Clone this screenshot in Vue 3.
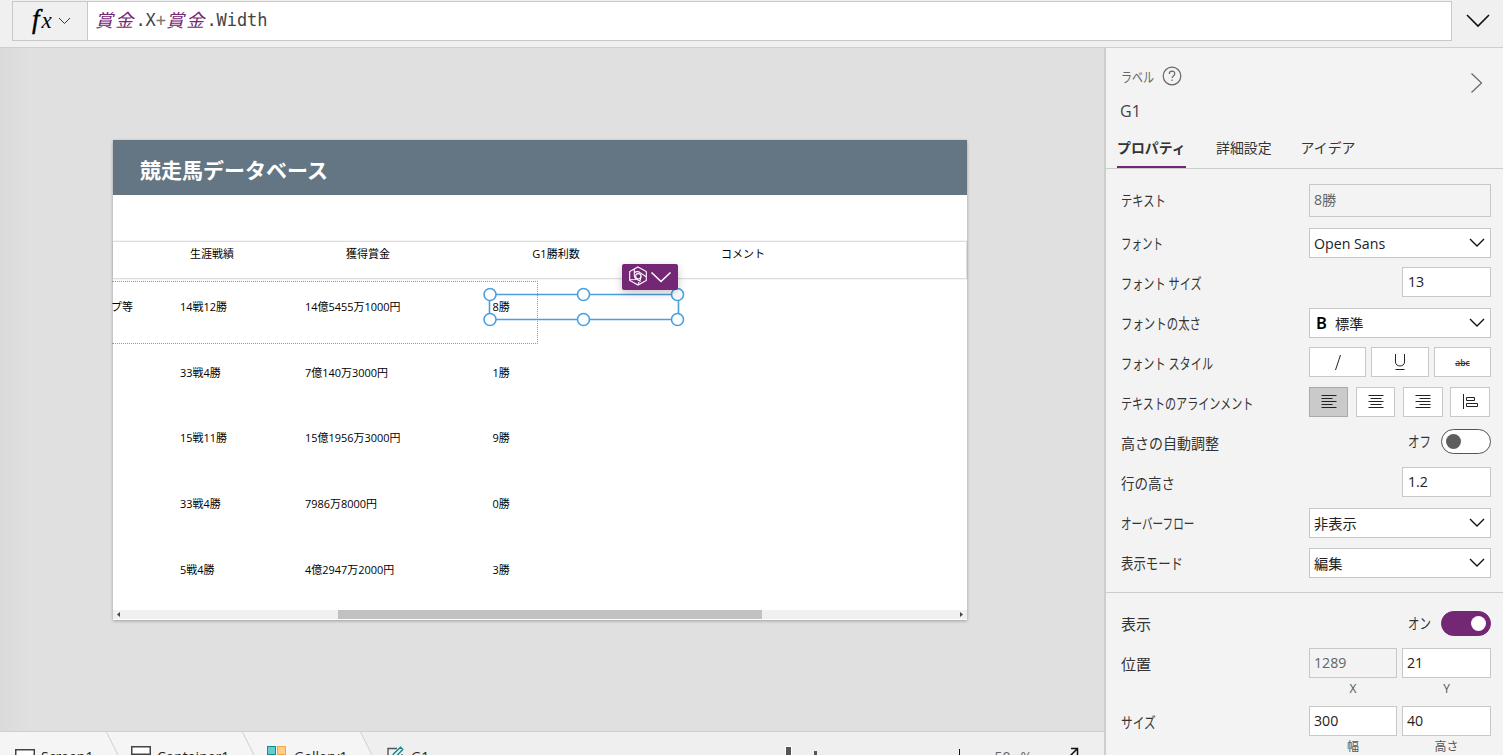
<template>
    <div class="studio">
        <header class="formula-bar">
            <div class="fx">
                <span class="fx-name"><span class="fx-f">f</span>x</span>
                <svg width="13" height="8" viewBox="0 0 13 8"><path d="M1 1l5.5 5.5L12 1" /></svg>
            </div>
            <div class="formula">
                <template v-for="(token, i) in formula" :key="i">
                    <span :class="token.type">{{ token.text }}</span>
                </template>
            </div>
            <div class="expand">
                <svg width="24" height="14" viewBox="0 0 24 14"><path d="M1 1l11 11L23 1" /></svg>
            </div>
        </header>

        <div class="body">
            <main class="work">
                <div class="stage">
                    <div class="screen">
                        <div class="title">競走馬データベース</div>
                        <div class="table-head">
                            <span v-for="name in columns" :key="name">{{ name }}</span>
                        </div>
                        <div class="gallery">
                            <div v-for="(horse, i) in horses" :key="i" class="horse">
                                <span class="note">{{ horse.note }}</span>
                                <span>{{ horse.record }}</span>
                                <span>{{ horse.prize }}</span>
                                <span>{{ horse.g1 }}</span>
                            </div>
                        </div>
                        <div class="scrollbar">
                            <svg width="3" height="5" viewBox="0 0 3 5"><path d="M3 0v5L0 2.5z" /></svg>
                            <div class="thumb"></div>
                            <svg width="3" height="5" viewBox="0 0 3 5"><path d="M0 0v5l3-2.5z" /></svg>
                        </div>
                        <div class="row-outline"></div>
                        <svg class="selection" width="204" height="42" viewBox="0 0 204 42">
                            <path d="M8 8.500H196M8 33.500H196M7.500 8v26M196.500 8v26" />
                            <circle v-for="(h, i) in handles" :key="i" :cx="h[0]" :cy="h[1]" r="6" />
                        </svg>
                        <div class="copilot">
                            <svg width="20" height="20" viewBox="0 0 20 20">
                                <path d="M10 1l8.300 4.600v8.800L10 19l-8.300-4.600V5.600z" />
                                <circle cx="10.300" cy="10.300" r="2.700" />
                                <path d="M6.300 3v6.500c0 1.800 1 3 2.400 3.800l4 2.200M6.500 6.500c2-1.200 4.500-.8 6 .4l5.500 3.800M2 13.800l6-.3M13 10.500c0 2.500-.8 4.500-3 7.500" />
                            </svg>
                            <svg width="22" height="13" viewBox="0 0 22 13"><path d="M1.500 1.500l9.500 9 9.500-9" /></svg>
                        </div>
                    </div>
                </div>

                <footer class="status">
                    <template v-for="crumb in crumbs" :key="crumb.name">
                        <div :class="['crumb', 'crumb-' + crumb.icon]">
                            <svg v-if="crumb.icon === 'screen'" width="20" height="16" viewBox="0 0 20 16">
                                <rect x=".75" y=".75" width="18.500" height="14" fill="#fff" stroke="#444" stroke-width="1.500" />
                            </svg>
                            <svg v-else-if="crumb.icon === 'container'" width="20" height="20" viewBox="0 0 20 20">
                                <rect x=".75" y=".75" width="18.500" height="7.500" fill="#fff" stroke="#444" stroke-width="1.500" />
                                <rect x=".75" y="11" width="18.500" height="7.500" fill="#fff" stroke="#444" stroke-width="1.500" />
                            </svg>
                            <svg v-else-if="crumb.icon === 'gallery'" width="20" height="20" viewBox="0 0 20 20">
                                <rect x=".5" y=".5" width="8" height="8" fill="#69c9cb" stroke="#0f8f93" />
                                <rect x="10.500" y=".5" width="8" height="8" fill="#fcce87" stroke="#f3aa3c" />
                                <rect x=".5" y="10.500" width="8" height="8" fill="#fcce87" stroke="#f3aa3c" />
                            </svg>
                            <svg v-else width="18" height="18" viewBox="0 0 18 18">
                                <path d="M10 2.500H1v14h14V8" fill="none" stroke="#555" stroke-width="1.400" />
                                <path d="M5 12l1.500-4L13.500 1.200l2.300 2.300L9 10.500z" fill="#e6f5f5" stroke="#12898b" stroke-width="1.400" />
                            </svg>
                            <span>{{ crumb.name }}</span>
                        </div>
                        <svg v-if="crumb.icon !== 'label'" class="slash" width="14" height="24" viewBox="0 0 14 24">
                            <path v-if="crumb.icon === 'gallery'" class="fill" d="M0 0h14v24h-2z" />
                            <path d="M.5 0l12 24" />
                        </svg>
                    </template>
                    <div class="zoom">
                        <i class="slider"></i>
                        <i class="notch"></i>
                        <svg class="plus" width="13" height="14" viewBox="0 0 13 14"><path d="M6.500 0v14M0 7h13" /></svg>
                        <span>50</span><span class="percent">%</span>
                        <svg class="fit" width="16" height="16" viewBox="0 0 16 16"><path d="M8 1.500h6.500V8M14.500 1.500L2 14" /></svg>
                    </div>
                </footer>
            </main>

            <aside class="panel">
                <div class="panel-head">
                    <div class="kind">
                        <span class="kind-name"><span class="squeeze" :style="squeeze('ラベル', 33, 14)">ラベル</span></span>
                        <svg width="20" height="20" viewBox="0 0 20 20">
                            <circle cx="10" cy="10" r="8.800" />
                            <path d="M7.300 8c0-3.800 5.500-3.600 5.500-.3 0 2.200-2.700 2.200-2.700 4.300M10.100 13.600v1.500" />
                        </svg>
                        <svg class="collapse" width="13" height="22" viewBox="0 0 13 22"><path d="M1.500 1.500l10 9.500-10 9.500" /></svg>
                    </div>
                    <div class="control-name">G1</div>
                    <nav class="tabs">
                        <span class="active">プロパティ</span>
                        <span>詳細設定</span>
                        <span>アイデア</span>
                    </nav>
                </div>

                <section class="group">
                    <div v-for="row in rows" :key="row.label" :class="['row', 'row-' + row.type]">
                        <label><span class="squeeze" :style="squeeze(row.label, row.width)">{{ row.label }}</span></label>
                        <div v-if="row.type === 'text'" class="field readonly">{{ row.value }}</div>
                        <div v-else-if="row.type === 'number'" class="field short">{{ row.value }}</div>
                        <div v-else-if="row.type === 'select'" class="field select">
                            <b v-if="row.bold">B</b>
                            <span>{{ row.value }}</span>
                            <svg width="16" height="10" viewBox="0 0 16 10"><path d="M1 1l7 7 7-7" /></svg>
                        </div>
                        <div v-else-if="row.type === 'style'" class="buttons">
                            <span class="btn"><svg width="10" height="18" viewBox="0 0 10 18"><path d="M7.500 2L2.500 17" /></svg></span>
                            <span class="btn"><svg width="14" height="18" viewBox="0 0 14 18"><path d="M2.500 1v8c0 5.300 9 5.300 9 0V1M2.500 16.500h9" /></svg></span>
                            <span class="btn strike">abc</span>
                        </div>
                        <div v-else-if="row.type === 'align'" class="buttons align">
                            <span v-for="(path, i) in alignments" :key="i" :class="['btn', { on: i === 0 }]">
                                <svg width="16" height="16" viewBox="0 0 16 16"><path :d="path" /></svg>
                            </span>
                        </div>
                        <div v-else-if="row.type === 'toggle'" class="switch">
                            <span class="state"><span class="squeeze" :style="squeeze(row.value, 23)">{{ row.value }}</span></span>
                            <span :class="['toggle', { on: row.on }]"></span>
                        </div>
                    </div>
                </section>

                <section class="group second">
                    <div class="row row-visible">
                        <label>表示</label>
                        <div class="switch">
                            <span class="state"><span class="squeeze" :style="squeeze('オン', 23)">オン</span></span>
                            <span class="toggle on"></span>
                        </div>
                    </div>
                    <div v-for="pair in pairs" :key="pair.label" class="row row-pair">
                        <label><span class="squeeze" :style="squeeze(pair.label, pair.width)">{{ pair.label }}</span></label>
                        <div v-for="item in pair.items" :key="item.name" class="cell">
                            <div :class="['field', { readonly: item.readonly }]">{{ item.value }}</div>
                            <small>{{ item.name }}</small>
                        </div>
                    </div>
                </section>
            </aside>
        </div>
    </div>
</template>

<script setup>
const formula = [
    { type: 'name', text: '賞金' },
    { type: 'prop', text: '.X' },
    { type: 'op', text: '+' },
    { type: 'name', text: '賞金' },
    { type: 'prop', text: '.Width' },
];

const columns = ['生涯戦績', '獲得賞金', 'G1勝利数', 'コメント'];

const horses = [
    { note: 'プ等', record: '14戦12勝', prize: '14億5455万1000円', g1: '8勝' },
    { note: '', record: '33戦4勝', prize: '7億140万3000円', g1: '1勝' },
    { note: '', record: '15戦11勝', prize: '15億1956万3000円', g1: '9勝' },
    { note: '', record: '33戦4勝', prize: '7986万8000円', g1: '0勝' },
    { note: '', record: '5戦4勝', prize: '4億2947万2000円', g1: '3勝' },
];

const handles = [[8, 8.5], [101.5, 8.5], [195.5, 8.5], [8, 33.5], [101.5, 33.5], [195.5, 33.5]];

const crumbs = [
    { icon: 'screen', name: 'Screen1' },
    { icon: 'container', name: 'Container1' },
    { icon: 'gallery', name: 'Gallery1' },
    { icon: 'label', name: 'G1' },
];

const rows = [
    { type: 'text', label: 'テキスト', width: 45, value: '8勝' },
    { type: 'select', label: 'フォント', width: 42, value: 'Open Sans' },
    { type: 'number', label: 'フォント サイズ', width: 81, value: '13' },
    { type: 'select', label: 'フォントの太さ', width: 80, value: '標準', bold: true },
    { type: 'style', label: 'フォント スタイル', width: 92 },
    { type: 'align', label: 'テキストのアラインメント', width: 133 },
    { type: 'toggle', label: '高さの自動調整', width: 98, value: 'オフ', on: false },
    { type: 'number', label: '行の高さ', width: 54, value: '1.2' },
    { type: 'select', label: 'オーバーフロー', width: 74, value: '非表示' },
    { type: 'select', label: '表示モード', width: 62, value: '編集' },
];

const pairs = [
    {
        label: '位置',
        width: 30,
        items: [{ name: 'X', value: '1289', readonly: true }, { name: 'Y', value: '21' }],
    },
    {
        label: 'サイズ',
        width: 35,
        items: [{ name: '幅', value: '300' }, { name: '高さ', value: '40' }],
    },
];

// left, center, right, justify
const alignments = [
    'M.5 1.500h15M.5 4.500h11M.5 7.500h15M.5 10.500h11M.5 13.500h15',
    'M.5 1.500h15M2.500 4.500h11M.5 7.500h15M2.500 10.500h11M.5 13.500h15',
    'M.5 1.500h15M4.500 4.500h11M.5 7.500h15M4.500 10.500h11M.5 13.500h15',
    'M1.500 0v15M4.500 3.500h8v3h-8zM4.500 9.500h11v3h-11z',
];

const squeeze = (text, width, size = 15) => {
    const natural = [...text].reduce((sum, ch) => sum + (ch === ' ' ? size * 0.26 : size), 0);
    return { transform: `scaleX(${(width / natural).toFixed(3)})` };
};
</script>

<style>
    body {
        margin: 0;
        overflow: hidden;
    }
</style>

<style scoped>
    .studio {
        display: flex;
        flex-direction: column;
        width: 1503px;
        height: 755px;
        overflow: hidden;
        background: #f0f0f0;
        color: #333;
        font-family: "Open Sans", "Noto Sans CJK JP", sans-serif;
        font-size: 15px;
    }
    .studio * {
        box-sizing: border-box;
    }
    svg {
        display: block;
        flex: none;
        fill: none;
        stroke: #111;
    }
    .formula-bar {
        display: flex;
        flex: none;
        height: 48px;
        padding: 1px 0 6px 12px;
        border-bottom: 1px solid #cfcfcf;
    }
    .fx {
        display: flex;
        align-items: center;
        width: 76px;
        height: 40px;
        padding-left: 19px;
        gap: 5px;
        border: 1px solid #c8c8c8;
    }
    .fx svg {
        stroke: #333;
    }
    .fx-name {
        width: 21px;
        margin-top: -3px;
        font: italic 23px/30px "Liberation Serif", serif;
        color: #000;
    }
    .fx-f {
        font-size: 27px;
        letter-spacing: 2px;
        -webkit-text-stroke: .4px #000;
    }
    .formula {
        display: flex;
        width: 1364px;
        height: 40px;
        padding-left: 7px;
        border: 1px solid #c8c8c8;
        border-left: none;
        background: #fff;
        font: 17px/37px "DejaVu Sans Mono", monospace;
        letter-spacing: -.05px;
        color: #444;
        white-space: pre;
    }
    .formula .name {
        font: italic 18px/35px "Noto Sans CJK JP", sans-serif;
        letter-spacing: 2.2px;
        color: #742774;
    }
    .formula .op {
        color: #777;
    }
    .expand {
        display: flex;
        align-items: center;
        margin-left: 14px;
    }
    .expand svg {
        stroke-width: 1.6;
    }
    .body {
        display: flex;
        flex: 1;
        min-height: 0;
    }
    .work {
        display: flex;
        flex-direction: column;
        width: 1106px;
        overflow: hidden;
        border-right: 2px solid #cecece;
    }
    .stage {
        flex: none;
        height: 683px;
        padding: 92px 0 0 113px;
        background: linear-gradient(90deg, #dadada, #e0e0e0 30px);
    }
    .screen {
        position: relative;
        width: 854px;
        height: 480px;
        background: #fff;
        color: #000;
        font-size: 11px;
        box-shadow: 0 1px 3px rgba(0, 0, 0, .3);
    }
    .title {
        height: 55px;
        padding-left: 27px;
        background: #647683;
        color: #fff;
        font-size: 21px;
        font-weight: bold;
        line-height: 60px;
    }
    .table-head {
        display: grid;
        grid-template-columns: 156px 156px 220px 154px;
        height: 38px;
        margin-top: 46px;
        padding-left: 21px;
        border: 1px solid #ddd;
        border-left: none;
        line-height: 23px;
        text-align: center;
        box-shadow: 0 0 2px rgba(0, 0, 0, .12);
    }
    .gallery {
        height: 331px;
        padding-top: 2px;
    }
    .horse {
        display: grid;
        grid-template-columns: 67px 125px 187.5px 187px;
        height: 65.7px;
        font-size: 10.95px;
        line-height: 51px;
        white-space: nowrap;
    }
    .note {
        margin-left: -2px;
    }
    .scrollbar {
        display: flex;
        align-items: center;
        justify-content: space-between;
        height: 9px;
        padding: 0 4px;
        background: #f0f0f0;
    }
    .scrollbar svg {
        fill: #444;
        stroke: none;
    }
    .thumb {
        width: 424px;
        height: 9px;
        margin-left: 20px;
        background: #c1c1c1;
    }
    .row-outline {
        position: absolute;
        left: -1px;
        top: 141px;
        width: 426px;
        height: 63px;
        border: 1px dotted #5ea6de;
        border-left: none;
    }
    .selection {
        position: absolute;
        left: 369px;
        top: 146px;
    }
    .selection path,
    .selection circle {
        stroke: #4a9fdf;
        stroke-width: 1.6;
    }
    .selection circle {
        fill: #fff;
    }
    .copilot {
        position: absolute;
        left: 509px;
        top: 124px;
        display: flex;
        align-items: center;
        width: 56px;
        height: 26px;
        padding: 0 0 3px 6px;
        gap: 2px;
        border-radius: 2px;
        background: #742774;
        box-shadow: 0 3px 8px rgba(0, 0, 0, .22);
    }
    .copilot svg {
        stroke: #fff;
        stroke-width: 1.1;
    }
    .copilot svg + svg {
        margin-top: 3px;
        stroke-width: 1.6;
    }
    .status {
        display: flex;
        flex: none;
        height: 50px;
        border-top: 1px solid #cfcfcf;
        background: #efefef;
        color: #222;
        font-size: 14px;
        line-height: 49px;
    }
    .crumb {
        display: flex;
        gap: 6px;
        background: #f5f5f5;
    }
    .crumb-screen {
        width: 106px;
        padding-left: 15px;
    }
    .crumb-container {
        width: 122px;
        padding-left: 11px;
    }
    .crumb-gallery {
        width: 104px;
        padding-left: 11px;
        gap: 7px;
    }
    .crumb-label {
        padding-left: 13px;
        background: none;
    }
    .crumb svg {
        margin-top: 14px;
    }
    .crumb-screen svg {
        margin-top: 17px;
    }
    .slash {
        background: #f5f5f5;
    }
    .slash path {
        stroke: #cfcfcf;
    }
    .slash .fill {
        fill: #efefef;
        stroke: none;
    }
    .zoom {
        display: flex;
        margin-left: auto;
        padding-right: 25px;
        color: #666;
    }
    .slider {
        width: 5px;
        height: 20px;
        margin: 15px 23px 0 0;
        background: #555;
        outline: 1px solid #fff;
    }
    .notch {
        width: 3px;
        height: 10px;
        margin: 19px 136px 0 0;
        background: #555;
    }
    .plus {
        margin: 17px 28px 0 0;
    }
    .percent {
        margin: 0 31px 0 10px;
    }
    .fit {
        margin-top: 15px;
        stroke-width: 1.5;
    }
    .panel {
        flex: 1;
        background: #f3f3f3;
    }
    .panel-head {
        height: 121px;
        border-bottom: 1px solid #ccc;
    }
    .kind {
        display: flex;
        height: 45px;
        padding: 18px 20px 0 15px;
        font-size: 14px;
        line-height: 22px;
        color: #666;
    }
    .kind svg {
        stroke: #666;
        stroke-width: 1.2;
    }
    .kind-name {
        width: 41px;
    }
    .kind .collapse {
        margin: 6px 0 0 auto;
    }
    .control-name {
        height: 36px;
        padding-left: 14px;
        font-size: 16px;
        line-height: 36px;
        color: #444;
    }
    .tabs {
        display: flex;
        gap: 30px;
        height: 39px;
        padding-left: 11px;
        font-size: 13.9px;
        line-height: 38px;
    }
    .tabs .active {
        width: 69px;
        font-weight: bold;
        border-bottom: 2px solid #742774;
        white-space: nowrap;
    }
    .tabs span:last-child {
        margin-left: -1px;
    }
    .squeeze {
        display: inline-block;
        transform-origin: left;
        white-space: pre;
    }
    .group {
        height: 424px;
        padding: 11px 12px 0 15px;
        border-bottom: 1px solid #ccc;
    }
    .group.second {
        height: 170px;
        padding-top: 10px;
        border: none;
    }
    .row {
        display: flex;
        height: 40px;
        padding-top: 4px;
    }
    .row label {
        flex: 1;
        min-width: 0;
        height: 32px;
        line-height: 32px;
        white-space: nowrap;
    }
    .row-text {
        height: 43px;
    }
    .row-select {
        padding-top: 5px;
    }
    .row-select label {
        margin-top: -1px;
    }
    .field {
        display: flex;
        align-items: center;
        height: 30px;
        padding-left: 4px;
        border: 1px solid #c8c8c8;
        background: #fff;
        color: #222;
        font-size: 14.2px;
        line-height: 28px;
    }
    .field.readonly {
        background: #f3f3f3;
        color: #666;
    }
    .row-text .field {
        width: 182px;
        height: 33px;
        padding-bottom: 2px;
    }
    .field.short {
        width: 89px;
        padding-left: 5px;
    }
    .field.select {
        width: 182px;
        padding-right: 5px;
    }
    .field.select span {
        padding-top: 1px;
    }
    .field.select svg {
        margin-left: auto;
        stroke-width: 1.4;
    }
    .field b {
        width: 21px;
        padding-left: 2px;
        font: 600 16.5px/28px "Noto Sans", sans-serif;
        color: #000;
    }
    .buttons {
        display: grid;
        grid-template-columns: 57px 58px 57px;
        gap: 5px;
        width: 182px;
    }
    .buttons.align {
        grid-template-columns: 39px 39px 40px 40px;
        gap: 8px;
    }
    .buttons.align .btn:last-child {
        margin-left: -1px;
        margin-right: 1px;
    }
    .btn {
        display: flex;
        align-items: center;
        justify-content: center;
        height: 30px;
        border: 1px solid #c8c8c8;
        background: #fff;
    }
    .btn svg {
        margin-bottom: 1px;
        stroke: #222;
    }
    .btn.on {
        border-color: #aaa;
        background: #cacaca;
    }
    .btn.strike {
        font-size: 8.5px;
        font-weight: 600;
        text-decoration: line-through;
    }
    .switch {
        display: flex;
        width: 83px;
        height: 25px;
        margin-top: 2px;
    }
    .state {
        width: 33px;
        line-height: 25px;
    }
    .toggle {
        flex: none;
        display: flex;
        align-items: center;
        width: 50px;
        height: 25px;
        padding: 0 4px;
        border: 1px solid #555;
        border-radius: 13px;
        background: #fff;
    }
    .toggle::before {
        content: "";
        width: 15px;
        height: 15px;
        border-radius: 50%;
        background: #605e5c;
    }
    .toggle.on {
        justify-content: flex-end;
        border-color: #742774;
        background: #742774;
    }
    .toggle.on::before {
        background: #fff;
    }
    .row-visible {
        height: 41px;
        padding-top: 6px;
    }
    .row-visible label {
        margin-top: -1px;
    }
    .row-pair {
        height: 58px;
    }
    .cell {
        width: 88px;
    }
    .cell + .cell {
        width: 89px;
        margin-left: 5px;
    }
    .cell small {
        display: block;
        font-size: 12px;
        line-height: 22px;
        text-align: center;
        color: #555;
    }
</style>
